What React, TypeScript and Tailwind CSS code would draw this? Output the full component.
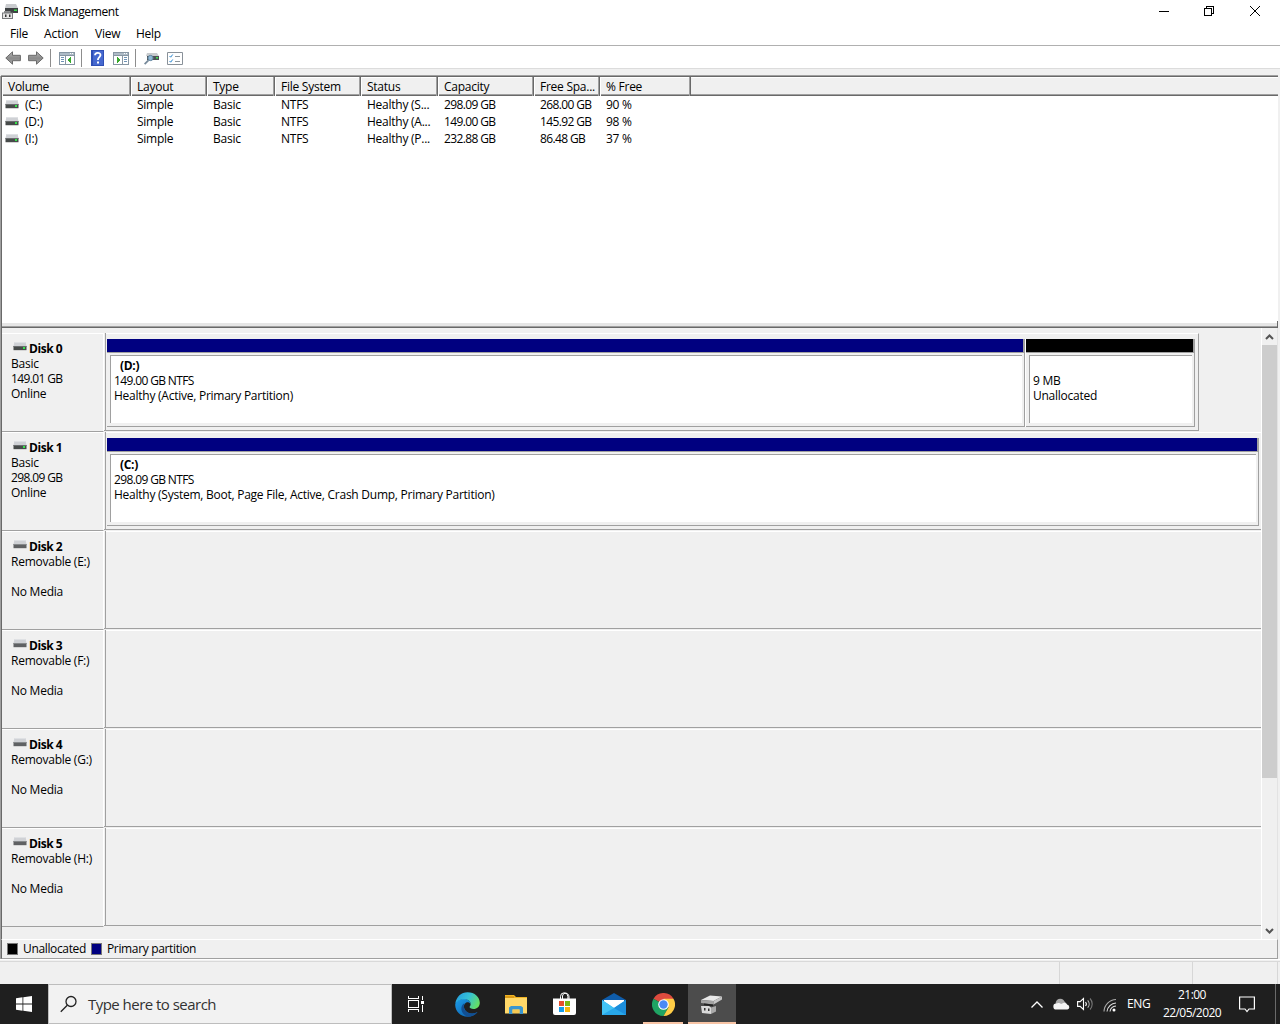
import React from "react";

const volumes = [
  ["(C:)", "Simple", "Basic", "NTFS", "Healthy (S...", "298.09 GB", "268.00 GB", "90 %"],
  ["(D:)", "Simple", "Basic", "NTFS", "Healthy (A...", "149.00 GB", "145.92 GB", "98 %"],
  ["(I:)", "Simple", "Basic", "NTFS", "Healthy (P...", "232.88 GB", "86.48 GB", "37 %"],
];
const headings = ["Volume", "Layout", "Type", "File System", "Status", "Capacity", "Free Spa...", "% Free"];
const columns = "grid grid-cols-[129px_76px_68px_86px_77px_96px_66px_91px_1fr]";

const spacing = (text: string) => (/\d GB/.test(text) ? "tracking-[-0.63px]" : "tracking-[-0.25px]");

function DriveIcon({ light = true, className = "" }: { light?: boolean; className?: string }) {
  return (
    <svg width="14" height="9" viewBox="0 0 14 9" className={className}>
      <path d="M1.500 0h11l1 4H.5z" fill="#cfd1d5" />
      <path d="M1.500 0h11l.3 1H1.200z" fill="#dfe1e4" />
      <path d="M.5 4h13v4H.5z" fill={light ? "#474b4a" : "#5f6163"} />
      <path d="M.5 4h13v1H.5z" fill={light ? "#6a6d6e" : "#86898b"} />
      <path d="M.5 8h13v1H.5z" fill="#d4d4d4" />
      {light && <path d="M10 5h2v2h-2z" fill="#35e54a" />}
    </svg>
  );
}

function AppIcon() {
  return (
    <svg width="16" height="16" viewBox="0 0 16 16">
      <path d="M4 0h10l2 4H3z" fill="#c9cbce" />
      <path d="M3 4h13v5H3z" fill="#3e4143" />
      <path d="M12 5.500h3v1.500h-3z" fill="#38d84a" />
      <path d="M2 7h6.500v3H2z" fill="#8d8f91" />
      <path d="M0 8.500h11V15H0z" fill="#77797b" />
      <path d="M1 9.500h9v4.500H1z" fill="#e6e6e6" />
      <path d="M3 10.500h1.500V13H3zM7 10.500h1.500V13H7z" fill="#333" />
    </svg>
  );
}

function Arrow({ flip = false }: { flip?: boolean }) {
  return (
    <svg width="16" height="14" viewBox="0 0 16 14" className={flip ? "-scale-x-100" : ""}>
      <defs>
        <linearGradient id="arrowFill" x1="0" y1="0" x2="0" y2="1">
          <stop offset="0" stopColor="#b9b9b9" />
          <stop offset=".5" stopColor="#8b8b8b" />
          <stop offset="1" stopColor="#a5a5a5" />
        </linearGradient>
      </defs>
      <path d="M.8 7 7.500.8V4.300H15.400v5.400H7.500v3.500z" fill="url(#arrowFill)" stroke="#6a6a6a" strokeLinejoin="round" />
    </svg>
  );
}

function PaneIcon({ right = false }: { right?: boolean }) {
  return (
    <svg width="16" height="13" viewBox="0 0 16 13" shapeRendering="crispEdges">
      <path d="M0 0h16v13H0z" fill="#8796a3" />
      <path d="M1 1h14v2H1z" fill="#aebbc6" />
      <path d="M11 1h1v1h-1zM13 1h1v1h-1z" fill="#fff" />
      <path d="M1 4h14v8H1z" fill="#fff" />
      {right ? (
        <>
          <path d="M9 4h1v8H9z" fill="#8796a3" />
          <path d="M11 5h3v1h-3zM11 7h3v1h-3zM11 9h3v1h-3z" fill="#6f93b5" />
          <path d="M4 5v6l4-3z" fill="#37a92c" />
        </>
      ) : (
        <>
          <path d="M6 4h1v8H6z" fill="#8796a3" />
          <path d="M2 5h3v1H2zM2 7h3v1H2zM2 9h3v1H2z" fill="#6f93b5" />
          <path d="M12 5v6L8 8z" fill="#37a92c" />
        </>
      )}
    </svg>
  );
}

function Separator({ className }: { className: string }) {
  return <div className={"h-[18px] w-px bg-[#8d8d8d] " + className} />;
}

function Partition({
  width,
  bar,
  name,
  lines,
}: {
  width: string;
  bar: string;
  name?: string;
  lines: string[];
}) {
  return (
    <div className={"flex h-[88px] flex-col border-b border-r border-[#a0a0a0] " + width}>
      <div className={"h-[14px] border-b border-r border-[#a0a0a0] " + bar} />
      <div className="mb-[3px] ml-[3px] mr-[2px] mt-[2px] flex-1 border-l border-t border-[#a0a0a0] bg-white pl-[3px] pt-[2px] leading-[15px]">
        <div className="h-[15px] pl-[6px] font-bold tracking-[-0.3px]">{name}</div>
        {lines.map((l) => (
          <div key={l} className={"h-[15px] whitespace-nowrap " + spacing(l)}>
            {l}
          </div>
        ))}
      </div>
    </div>
  );
}

function DiskRow({
  n,
  lines,
  online,
  children,
}: {
  n: number;
  lines: string[];
  online?: boolean;
  children?: React.ReactNode;
}) {
  return (
    <div className="flex h-[99px]">
      <div className="h-[99px] w-[102px] shrink-0 border-b border-r border-t border-b-[#a0a0a0] border-r-white border-t-white pl-[9px] pt-[7px] leading-[15px]">
        <div className="flex h-[15px]">
          <DriveIcon light={!!online} className="ml-[2px] mr-[2px] mt-px" />
          <span className="font-bold tracking-[-0.45px]">Disk {n}</span>
        </div>
        {lines.map((l, i) => (
          <div key={i} className={"h-[15px] whitespace-nowrap " + spacing(l)}>
            {l}
          </div>
        ))}
      </div>
      <div className="h-[98px] w-px shrink-0 border-b border-[#a0a0a0]" />
      <div className="h-[98px] w-px shrink-0 bg-[#a0a0a0]" />
      {children ?? <div className="h-[98px] flex-1 border-b border-t border-b-[#a0a0a0] border-t-white" />}
    </div>
  );
}

function Taskbar() {
  return (
    <div className="flex h-10 bg-[#1f1f1f] text-white">
      <div className="flex w-12 items-center justify-center">
        <svg width="16" height="16" viewBox="0 0 16 16" fill="#fff">
          <path d="M0 2.200 6.500 1.300V7.500H0zM7.300 1.200 16 0v7.500H7.300zM0 8.400h6.500v6.300L0 13.800zM7.300 8.400H16V16l-8.700-1.200z" />
        </svg>
      </div>
      <div className="flex w-[344px] items-center border border-[#bdbdbd] bg-[#f2f2f2] pl-[11px]">
        <svg width="18" height="18" viewBox="0 0 18 18" fill="none" stroke="#222" strokeWidth="1.300">
          <circle cx="11" cy="6.500" r="5" />
          <path d="M7.300 10.200.8 16.800" />
        </svg>
        <span className="ml-[10px] text-[15px] tracking-[-0.53px] text-[#333]">Type here to search</span>
      </div>
      <div className="flex w-12 items-center justify-center">
        <svg width="18" height="16" viewBox="0 0 18 16" fill="none" stroke="#fff" shapeRendering="crispEdges">
          <path d="M1.500 0v2.500h10V0M1.500 16v-2.500h10V16M1.500 4.500h10v7h-10zM15.500 0v4M15.500 9v7" />
          <path d="M14 5h3v3h-3z" fill="#fff" stroke="none" />
        </svg>
      </div>
      <div className="flex w-[54px] items-center justify-center">
        <svg width="25" height="25" viewBox="0 0 24 24">
          <defs>
            <linearGradient id="edgeTop" x1="0" y1=".2" x2="1" y2=".6">
              <stop offset="0" stopColor="#249de0" />
              <stop offset=".5" stopColor="#35c1d6" />
              <stop offset="1" stopColor="#66e061" />
            </linearGradient>
            <linearGradient id="edgeLow" x1="0" y1="0" x2="1" y2="1">
              <stop offset="0" stopColor="#1b9be8" />
              <stop offset="1" stopColor="#0c59a4" />
            </linearGradient>
          </defs>
          <path d="M.2 12.500C.2 9 4 6.800 8.500 6.800c3.700 0 6.500 2 6.500 4.600-1-1.300-2.200-1.700-3.300-1.500C9 10.500 8 13.500 9 16c1.300 3.200 5 5.300 8.600 4.500 1.600-.3 3-1 4-1.400C19.500 22 16 23.800 12 23.800 5.500 23.800.2 18.700.2 12.500z" fill="url(#edgeLow)" />
          <path d="M9 10.800c-4 2-4.600 9.500 3 13 4 0 7.500-1.700 9.700-4.700-4.500 3-11.200 1.500-12.800-3.300-.6-1.900-.4-3.700.1-5z" fill="#124f93" />
          <path d="M.3 11C1.200 4.500 6 .2 12 .2c7 0 11.800 4.700 11.800 10 0 3.600-2.600 6-6 6-2.400 0-3.800-.9-3.800-1.800 0-.8 1-1.100 1-3C15 8.800 12.500 7 9 7 5 7 1.500 9 .3 11z" fill="url(#edgeTop)" />
        </svg>
      </div>
      <div className="flex w-11 items-center justify-center">
        <svg width="22" height="19" viewBox="0 0 22 19">
          <path d="M0 0h9l2 2h11v16H0z" fill="#f0b323" />
          <path d="M0 3h22v15.500H0z" fill="#ffd869" />
          <path d="M0 1h9v2H0z" fill="#d99a16" />
          <path d="M4 19v-6.500L6 11h10l2 1.500V19h-3.500v-4.500h-7V19z" fill="#3a96d0" />
          <path d="M7.500 14.500h7V18h-7z" fill="#f6c953" />
        </svg>
      </div>
      <div className="flex w-[53px] items-center justify-center">
        <svg width="23" height="24" viewBox="0 0 23 24">
          <path d="M7.500 7V4.500a3.700 3.700 0 0 1 7.400 0V7M9.500 7V4a3.200 3.200 0 0 1 6-1.200q.5 1 .5 2.200v2" fill="none" stroke="#fff" />
          <path d="M0 6.500h23V21a2 2 0 0 1-2 2H2a2 2 0 0 1-2-2z" fill="#fff" />
          <path d="M6 9h5v5H6z" fill="#e8502c" />
          <path d="M12 9h5v5h-5z" fill="#7cb913" />
          <path d="M6 15h5v5H6z" fill="#159eeb" />
          <path d="M12 15h5v5h-5z" fill="#f8b60b" />
        </svg>
      </div>
      <div className="flex w-[46px] items-center justify-center">
        <svg width="24" height="22" viewBox="0 0 24 22">
          <path d="M0 7 12 0l12 7v3H0z" fill="#0f5dab" />
          <path d="M2 7h20v8H2z" fill="#fff" />
          <path d="M0 7l12 8L24 7v15H0z" fill="#28a8ea" />
          <path d="M0 7l12 8L0 22z" fill="#43c3f5" />
          <path d="M24 7v15L12 15z" fill="#1c8edc" />
        </svg>
      </div>
      <div className="ml-1.5 flex w-10 items-center justify-center border-b-2 border-[#f7c4a5]">
        <svg width="23" height="23" viewBox="0 0 24 24" className="mt-0.5">
          <path d="M12 12 1.600 6A12 12 0 0 1 22.400 6z" fill="#dd4b3e" />
          <path d="M12 12 1.600 6A12 12 0 0 0 12 24l5.200-9z" fill="#1fa463" />
          <path d="M12 6h10.400A12 12 0 0 1 12 24l5.200-9z" fill="#ffcd46" />
          <circle cx="12" cy="12" r="5.500" fill="#fff" />
          <circle cx="12" cy="12" r="4.400" fill="#4a8af4" />
        </svg>
      </div>
      <div className="ml-[5px] flex w-12 items-center justify-center border-b-2 border-[#f7c4a5] bg-[#4c4c4c]">
        <svg width="24" height="20" viewBox="0 0 24 20" className="mt-[3px]">
          <path d="M1 5 10 .5 22 1.500 13.500 6z" fill="#e8e8e8" />
          <path d="M1 5 13.500 6v3.500L1 8z" fill="#a3a3a3" />
          <path d="m13.500 6 8.500-4.500v3l-8.500 5z" fill="#c4c4c4" />
          <path d="m4 8.400 9 1.100v1.800l-9-1z" fill="#222" />
          <path d="M1 11h8l2 1.500V19l-9-1z" fill="#d9d9d9" />
          <path d="m11 12.500 5-1.500v5.500L11 19z" fill="#a9a9a9" />
          <path d="M4 13h1.500v2.500H4zM8 13.500h1.500V16H8z" fill="#333" />
        </svg>
      </div>
      <div className="ml-auto flex items-center">
        <svg width="12" height="7" viewBox="0 0 12 7" fill="none" stroke="#fff" strokeWidth="1.300">
          <path d="M.5 6.500 6 1l5.500 5.500" />
        </svg>
        <svg width="17" height="12" viewBox="0 0 17 12" className="ml-[10px]">
          <path d="M3 7a4.500 4.500 0 0 1 8.500-3.500L13 5 4 9z" fill="#a9a9a9" />
          <path d="M3.500 11.500a3 3 0 0 1-.3-6C5 4.500 7 5 8 6l3-1.300a3.500 3.500 0 0 1 3.400 2.100 2.400 2.400 0 0 1 0 4.700z" fill="#f4f4f4" />
        </svg>
        <svg width="17" height="14" viewBox="0 0 17 14" className="ml-[7px]" fill="none" stroke="#fff" strokeWidth="1.100">
          <path d="M.6 4.600h2.500L6.500 1.500v11L3.100 9.400H.6z" />
          <path d="M8.500 5a3 3 0 0 1 0 4" />
          <path d="M10.700 3.300a5.500 5.500 0 0 1 0 7.400" stroke="#bbb" />
          <path d="M13 1.500a8 8 0 0 1 0 11" stroke="#777" />
        </svg>
        <svg width="14" height="14" viewBox="0 0 14 14" className="ml-[9px] mt-0.5" fill="none" stroke="#ddd" strokeWidth="1.100">
          <path d="M1 13.500A12.500 12.500 0 0 1 13 1.500" stroke="#aaa" />
          <path d="M4 13.500a9.500 9.500 0 0 1 9-8.500M7 13.500a6.500 6.500 0 0 1 6-5.500" />
          <circle cx="11" cy="12" r="1.500" fill="#fff" stroke="none" />
        </svg>
        <span className="ml-[10px] w-6 text-[12px] tracking-[-0.4px]">ENG</span>
        <div className="ml-[11px] w-[60px] whitespace-nowrap pb-px text-center text-[12px] leading-[18px] tracking-[-0.55px]">
          <div>21:00</div>
          <div>22/05/2020</div>
        </div>
        <svg width="16" height="17" viewBox="0 0 16 17" className="ml-[17px] mr-[20px]" fill="none" stroke="#fff" strokeWidth="1.200">
          <path d="M.6 1h14.800v12H10l-2 2.500L6 13H.6z" />
        </svg>
        <div className="mr-1 h-10 w-px bg-[#6a6a6a]" />
      </div>
    </div>
  );
}

export default function App() {
  return (
    <div className="flex h-[1024px] w-[1280px] flex-col overflow-hidden bg-[#f0f0f0] font-['Open_Sans','Noto_Sans',sans-serif] text-[12px] tracking-[-0.25px] text-black">
      <div className="flex h-6 items-center bg-white">
        <div className="ml-[2px]">
          <AppIcon />
        </div>
        <span className="ml-[5px] tracking-[-0.36px]">Disk Management</span>
        <svg width="102" height="12" viewBox="0 0 102 12" className="mb-[3px] ml-auto mr-[19px]" fill="none" stroke="#000">
          <path d="M0 6.500h10M45.500 3.500h7v7h-7zM47.500 3.500v-2h7v7h-2" shapeRendering="crispEdges" />
          <path d="m91 1 10 10M101 1 91 11" />
        </svg>
      </div>
      <div className="flex h-[22px] border-b border-[#b0b0b0] bg-white leading-5">
        <span className="ml-[10px] w-[34px]">File</span>
        <span className="w-[51px] tracking-[-0.1px]">Action</span>
        <span className="w-[41px]">View</span>
        <span>Help</span>
      </div>
      <div className="flex h-[23px] items-center border-b border-[#dcdcdc] bg-white pl-[5px] pt-[2px]">
        <Arrow />
        <div className="ml-[7px] h-[14px]">
          <Arrow flip />
        </div>
        <Separator className="ml-[6px] mr-[8px]" />
        <PaneIcon />
        <Separator className="ml-[6px] mr-[9px]" />
        <svg width="13" height="16" viewBox="0 0 13 16">
          <path d="M0 0h13v16H0z" fill="#2f4fb5" />
          <path d="M2 1h10v14H2z" fill="#4568cf" />
          <path d="M4 5.300c0-3.300 5.500-3.300 5.500-.2 0 2-2.600 2.200-2.600 4.900" fill="none" stroke="#fff" strokeWidth="1.800" />
          <path d="M6 11.500h2v2H6z" fill="#fff" />
        </svg>
        <div className="ml-[9px]">
          <PaneIcon right />
        </div>
        <Separator className="ml-[6px] mr-[8px]" />
        <svg width="15" height="13" viewBox="0 0 15 13">
          <path d="M3 1h10l2 3H2z" fill="#c8cbce" />
          <path d="M3 4h12v4H3z" fill="#4d5254" />
          <path d="M12 5h2v1.500h-2z" fill="#42e052" />
          <circle cx="6.500" cy="6" r="2.600" fill="#8fb9d6" stroke="#5c7f9b" />
          <path d="m4.600 8.200-4 4" stroke="#76899a" strokeWidth="1.800" />
        </svg>
        <svg width="16" height="13" viewBox="0 0 16 13" className="ml-[8px]">
          <path d="M.5.500h15v12H.5z" fill="#fff" stroke="#899199" />
          <path d="m2.500 4 1.200 1.200 2-2.700M2.500 9l1.200 1.200 2-2.700" fill="none" stroke="#2b87d1" />
          <path d="M8 4.500h5M8 9.500h5" stroke="#8c959c" />
        </svg>
      </div>
      <div className="h-[7px]" />

      <div className="flex h-[883px] flex-col border-l border-[#a0a0a0]">
        <div className="mr-[2px] flex h-[245px] flex-col border-l border-t border-[#696969] bg-white shadow-[0_-1px_0_#a0a0a0]">
          <div className={columns + " h-[19px] border-b border-[#696969] bg-[#f0f0f0] leading-[19px] shadow-[inset_0_-1px_0_#a0a0a0,inset_0_1px_0_#fff]"}>
            {headings.map((h) => (
              <div key={h} className="whitespace-nowrap border-r border-[#696969] pl-[6px] shadow-[inset_-1px_0_0_#a0a0a0,inset_1px_0_0_#fff]">
                {h}
              </div>
            ))}
            <div />
          </div>
          <div className="bg-white pt-px">
            {volumes.map((row) => (
              <div key={row[0]} className={columns + " h-[17px] leading-[16px]"}>
                {row.map((cell, i) => (
                  <div key={i} className={"flex whitespace-nowrap " + (i === 0 ? "pl-[3px] " : "pl-[6px] ") + spacing(cell)}>
                    {i === 0 && <DriveIcon className="mr-[6px] mt-[3px]" />}
                    {cell}
                  </div>
                ))}
              </div>
            ))}
          </div>
        </div>
        <div className="mr-[2px] h-[7px] border-b border-l border-r border-[#696969] bg-[#e6e6e6] shadow-[inset_0_-1px_0_#a0a0a0,inset_0_2px_0_#fff]" />
        <div className="mr-[2px] flex h-[611px] border-l border-r border-l-[#696969] border-r-[#e3e3e3]">
          <div className="w-[1259px] shrink-0 pt-[5px]">
            <DiskRow n={0} online lines={["Basic", "149.01 GB", "Online"]}>
              <div className="flex h-[98px] w-[1093px] border-b border-r border-t border-b-[#a0a0a0] border-r-[#a0a0a0] border-t-white pl-px pt-[5px]">
                <Partition width="w-[918px]" bar="bg-[#000080]" name="(D:)" lines={["149.00 GB NTFS", "Healthy (Active, Primary Partition)"]} />
                <div className="h-[88px] w-px bg-white" />
                <Partition width="w-[169px]" bar="bg-black" lines={["9 MB", "Unallocated"]} />
              </div>
            </DiskRow>
            <DiskRow n={1} online lines={["Basic", "298.09 GB", "Online"]}>
              <div className="flex h-[98px] flex-1 border-b border-t border-b-[#a0a0a0] border-t-white pl-px pt-[5px]">
                <Partition
                  width="w-[1152px]"
                  bar="bg-[#000080]"
                  name="(C:)"
                  lines={["298.09 GB NTFS", "Healthy (System, Boot, Page File, Active, Crash Dump, Primary Partition)"]}
                />
              </div>
            </DiskRow>
            {["E", "F", "G", "H"].map((letter, i) => (
              <DiskRow key={letter} n={i + 2} lines={["Removable (" + letter + ":)", "", "No Media"]} />
            ))}
          </div>
          <div className="flex w-4 flex-col items-center border-l border-white">
            <div className="flex h-[17px] items-center justify-center">
              <svg width="9" height="6" viewBox="0 0 9 6" fill="none" stroke="#555" strokeWidth="2">
                <path d="M1 5 4.500 1.500 8 5" />
              </svg>
            </div>
            <div className="h-[433px] w-[15px] bg-[#cdcdcd]" />
            <svg width="9" height="6" viewBox="0 0 9 6" fill="none" stroke="#555" strokeWidth="2" className="mb-[5px] mt-auto">
              <path d="M1 1 4.500 4.500 8 1" />
            </svg>
          </div>
        </div>
        <div className="mr-[2px] flex h-5 items-center border-b border-l border-r border-t border-b-[#a0a0a0] border-l-[#696969] border-r-[#a0a0a0] border-t-white pl-[5px]">
          <div className="h-3 w-[11px] border border-[#777] bg-black" />
          <span className="ml-[5px] w-[63px] tracking-[-0.35px]">Unallocated</span>
          <div className="ml-[5px] h-3 w-[11px] border border-[#777] bg-[#000080]" />
          <span className="ml-[5px] tracking-[-0.35px]">Primary partition</span>
        </div>
      </div>
      <div className="flex h-[25px] flex-col border-t border-white">
        <div className="mt-px flex h-[23px] border-t border-[#d9d9d9]">
          <div className="w-[1060px] border-r border-[#d7d7d7]" />
          <div className="w-[133px] border-r border-[#d7d7d7]" />
          <div className="w-[85px] border-r border-[#d7d7d7]" />
        </div>
      </div>
      <Taskbar />
    </div>
  );
}
